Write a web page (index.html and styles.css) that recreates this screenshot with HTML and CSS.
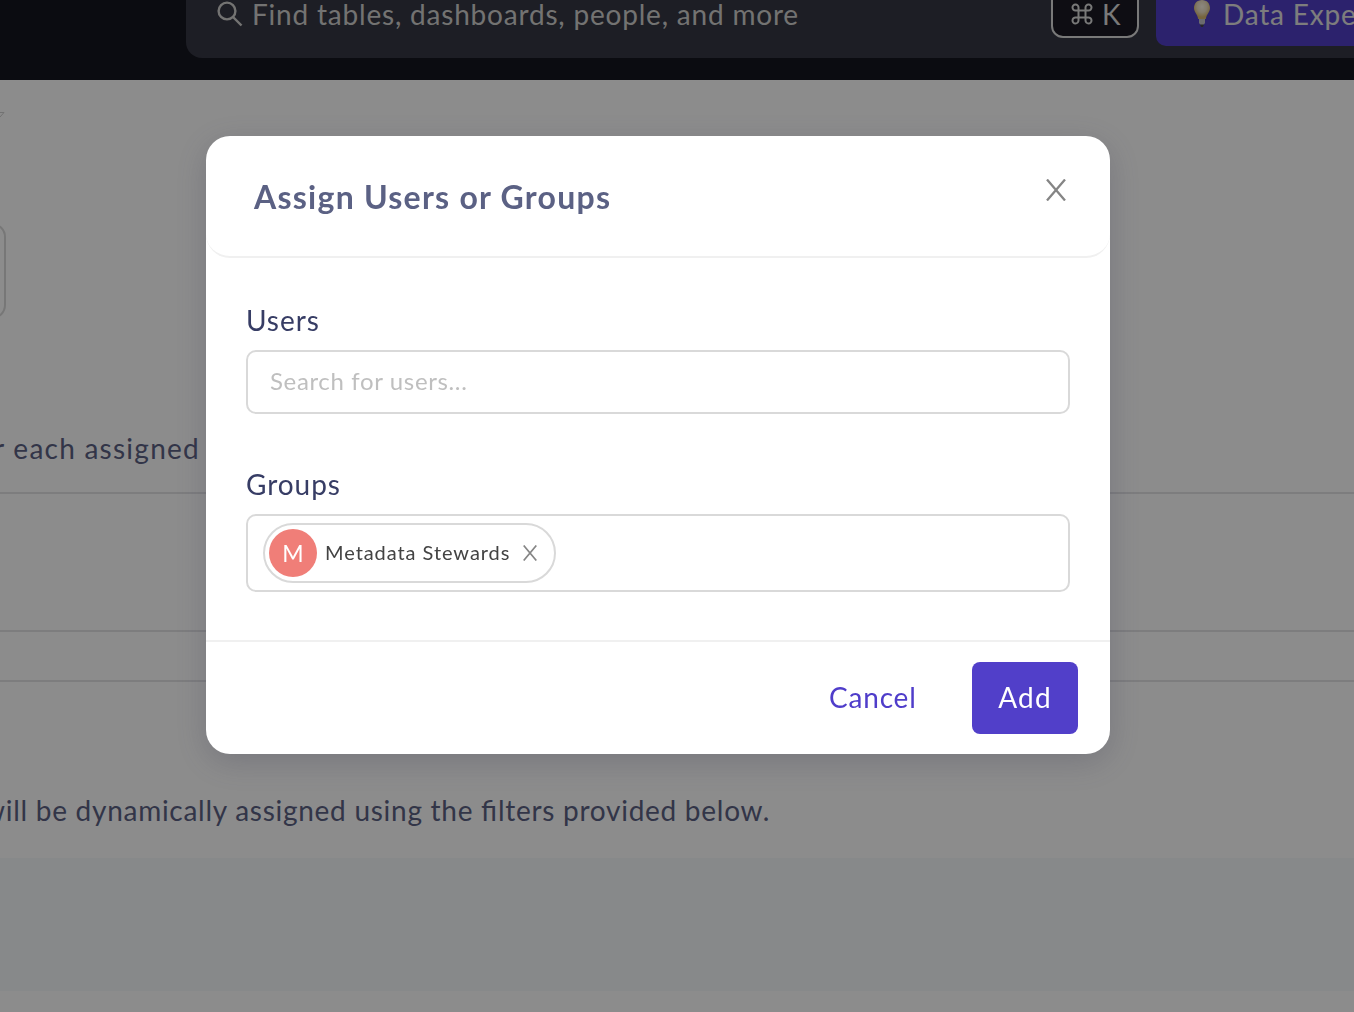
FILE: index.html
```
<!DOCTYPE html>
<html lang="en">
<head>
<meta charset="utf-8">
<title>Assign Users or Groups</title>
<link rel="stylesheet" href="styles.css">
</head>
<body>
<div class="page">
  <header class="topbar">
    <div class="search">
      <svg class="search-icon" viewBox="0 0 26 26"><circle cx="10" cy="10" r="8.4"/><path d="M16 16l8.500 8.500"/></svg>
      <span class="search-text">Find tables, dashboards, people, and more</span>
      <kbd class="shortcut">
        <svg class="command-icon" viewBox="0 0 22 22"><path d="M7.5 7.5h7v7h-7zM7.5 7.5H4.6a3 3 0 1 1 2.9-3zM14.5 7.5V4.5a3 3 0 1 1 2.9 3zM14.5 14.5h2.9a3 3 0 1 1-2.9 3zM7.5 14.5v3a3 3 0 1 1-2.9-3z"/></svg>
        <span>K</span>
      </kbd>
      <div class="expert">
        <svg class="bulb" viewBox="0 0 18 28">
          <defs>
            <radialGradient id="glass" cx=".5" cy=".35" r=".55"><stop offset="0" stop-color="#fff6e6"/><stop offset=".55" stop-color="#eee0c4"/><stop offset="1" stop-color="#d9b870"/></radialGradient>
          </defs>
          <path fill="url(#glass)" d="M9 0C4 0 1 3.600 1 8c0 4 3.500 6 4.200 11h7.600C13.500 14 17 12 17 8c0-4.400-3-8-8-8z"/>
          <path class="cap" d="M6 19h6v4l-1.500 2h-3L6 23z"/><path class="tip" d="M7 24.500h4L10 27H8z"/>
        </svg>
        <span class="expert-text">Data Expert</span>
      </div>
    </div>
  </header>
  <main class="content">
    <svg class="caret" viewBox="0 0 5 6"><path d="M0 .5h4L0 5"/></svg>
    <div class="card-edge"></div>
    <div class="clip clip-one"><span>for each assigned</span></div>
    <div class="row row-a"></div>
    <div class="row row-b"></div>
    <div class="row row-c"></div>
    <div class="clip clip-two"><span>will be dynamically assigned using the filters provided below.</span></div>
    <div class="band"></div>
  </main>
</div>
<div class="mask">
  <section class="modal" role="dialog">
    <div class="modal-head">
      <h1 class="title">Assign Users or Groups</h1>
      <svg class="close" viewBox="0 0 20 22"><path d="M1 .5l18 21M19 .5l-18 21"/></svg>
    </div>
    <div class="modal-body">
      <label class="label">Users</label>
      <div class="field users"><span class="placeholder">Search for users...</span></div>
      <label class="label l-groups">Groups</label>
      <div class="field groups">
        <div class="tag">
          <span class="avatar">M</span>
          <span class="tag-name">Metadata Stewards</span>
          <svg class="tag-close" viewBox="0 0 14 16"><path d="M.7.5l12.600 15M13.300.5L.7 15.500"/></svg>
        </div>
      </div>
    </div>
    <div class="modal-foot">
      <span class="cancel">Cancel</span>
      <span class="add">Add</span>
    </div>
  </section>
</div>
</body>
</html>
```
FILE: styles.css
```
* { box-sizing: border-box; }
body { margin: 0; width: 1354px; height: 1012px; overflow: hidden; background: #fff; font-family: Lato, "Open Sans", sans-serif; }
svg { display: block; flex: none; fill: none; }
span, h1, label { white-space: nowrap; }

.page { width: 1354px; height: 1012px; overflow: hidden; display: flex; flex-direction: column; }
.topbar { height: 80px; flex: none; background: #151720; padding-left: 186px; }
.search { height: 58px; background: #363744; border-bottom-left-radius: 16px; display: flex; align-items: flex-start; padding-left: 31px; overflow: hidden; }
.search-icon { width: 26px; height: 26px; margin-top: 1px; stroke: #d2d2d0; stroke-width: 2.4; }
.search-text { flex: 0 0 799px; margin-left: 9px; line-height: 29px; font-size: 28px; letter-spacing: .8px; color: #d2d2d0; }
.shortcut { margin: -20px 0 0; width: 88px; height: 58px; flex: none; border: 2px solid #dcdcdc; border-radius: 12px; background: #1a1923; color: #dcdcdc; font: 28px/29px Lato, sans-serif; display: flex; padding: 18px 0 0 18px; gap: 9px; }
.command-icon { width: 22px; height: 22px; margin-top: 3px; stroke: #dcdcdc; stroke-width: 2; }
.expert { margin-left: 17px; margin-top: -10px; height: 56px; width: 240px; flex: none; border-radius: 10px; background: #513fc6; display: flex; padding-left: 37px; color: #e4e4e4; }
.bulb { width: 18px; height: 28px; margin-top: 10px; }
.cap { fill: #c3c3c9; }
.tip { fill: #45454c; }
.expert-text { margin-left: 12px; margin-top: 10px; line-height: 29px; font-size: 28px; letter-spacing: .8px; }

.content { flex: 1; display: flex; flex-direction: column; }
.caret { width: 5px; height: 6px; margin-top: 32px; stroke: #d0d0d0; }
.card-edge { width: 40px; height: 96px; margin: 105px 0 0 -34px; border: 2px solid #d9d9d9; border-radius: 14px; flex: none; }
.clip { display: flex; justify-content: flex-end; overflow: hidden; line-height: 36px; font-size: 28px; color: #5c6284; flex: none; height: 40px; }
.clip-one { width: 200px; margin-top: 111px; letter-spacing: 1.25px; }
.row { border-top: 2px solid #e3e3e6; flex: none; }
.row-a { height: 138px; margin-top: 22px; }
.row-b { height: 50px; }
.row-c { height: 112px; }
.clip-two { width: 770px; letter-spacing: .73px; font-feature-settings: "liga" 1; }
.band { height: 133px; margin-top: 26px; background: #f6f9fc; flex: none; }

.mask { position: fixed; inset: 0; background: rgba(0,0,0,.45); padding: 136px 0 0 206px; }
.modal { width: 904px; height: 618px; background: #fff; border-radius: 24px; display: flex; flex-direction: column; box-shadow: 0 8px 32px rgba(58,58,80,.26); }
.modal-head { height: 122px; border-bottom: 2px solid #f0f0f0; border-radius: 24px; display: flex; justify-content: space-between; padding: 0 44px 0 48px; }
.title { margin: 39px 0 0; font-size: 32px; line-height: 44px; font-weight: 700; letter-spacing: 1.25px; color: #5b6184; }
.close { width: 20px; height: 22px; margin-top: 43px; stroke: #858585; stroke-width: 2.3; }
.modal-body { height: 382px; padding: 44px 40px 0; display: flex; flex-direction: column; }
.label { font-size: 28px; line-height: 36px; letter-spacing: .95px; color: #373d65; }
.field { border: 2px solid #d9d9d9; border-radius: 10px; margin-top: 12px; display: flex; align-items: center; flex: none; }
.users { height: 64px; padding: 0 0 3px 22px; }
.placeholder { font-size: 24px; letter-spacing: .64px; color: #bfbfbf; }
.l-groups { margin-top: 52px; }
.groups { height: 78px; padding-left: 15px; }
.tag { width: 293px; height: 60px; border: 2px solid #d9d9d9; border-radius: 30px; display: flex; align-items: center; padding-left: 4px; }
.avatar { width: 48px; height: 48px; flex: none; border-radius: 50%; background: #f07e78; color: #fff; font-size: 23px; line-height: 48px; text-align: center; }
.tag-name { flex: 0 0 206px; padding: 0 0 2px 8px; font-size: 20px; letter-spacing: .94px; color: #434343; }
.tag-close { width: 14px; height: 16px; stroke: #858585; stroke-width: 1.7; }
.modal-foot { flex: 1; border-top: 2px solid #f0f0f0; display: flex; align-items: flex-start; justify-content: flex-end; padding: 20px 32px 0 0; font-size: 28px; line-height: 71px; letter-spacing: .8px; }
.cancel { width: 143px; color: #4f3dca; }
.add { width: 106px; height: 72px; border-radius: 8px; background: #513fc9; color: #fff; text-align: center; letter-spacing: 1.2px; }
```
